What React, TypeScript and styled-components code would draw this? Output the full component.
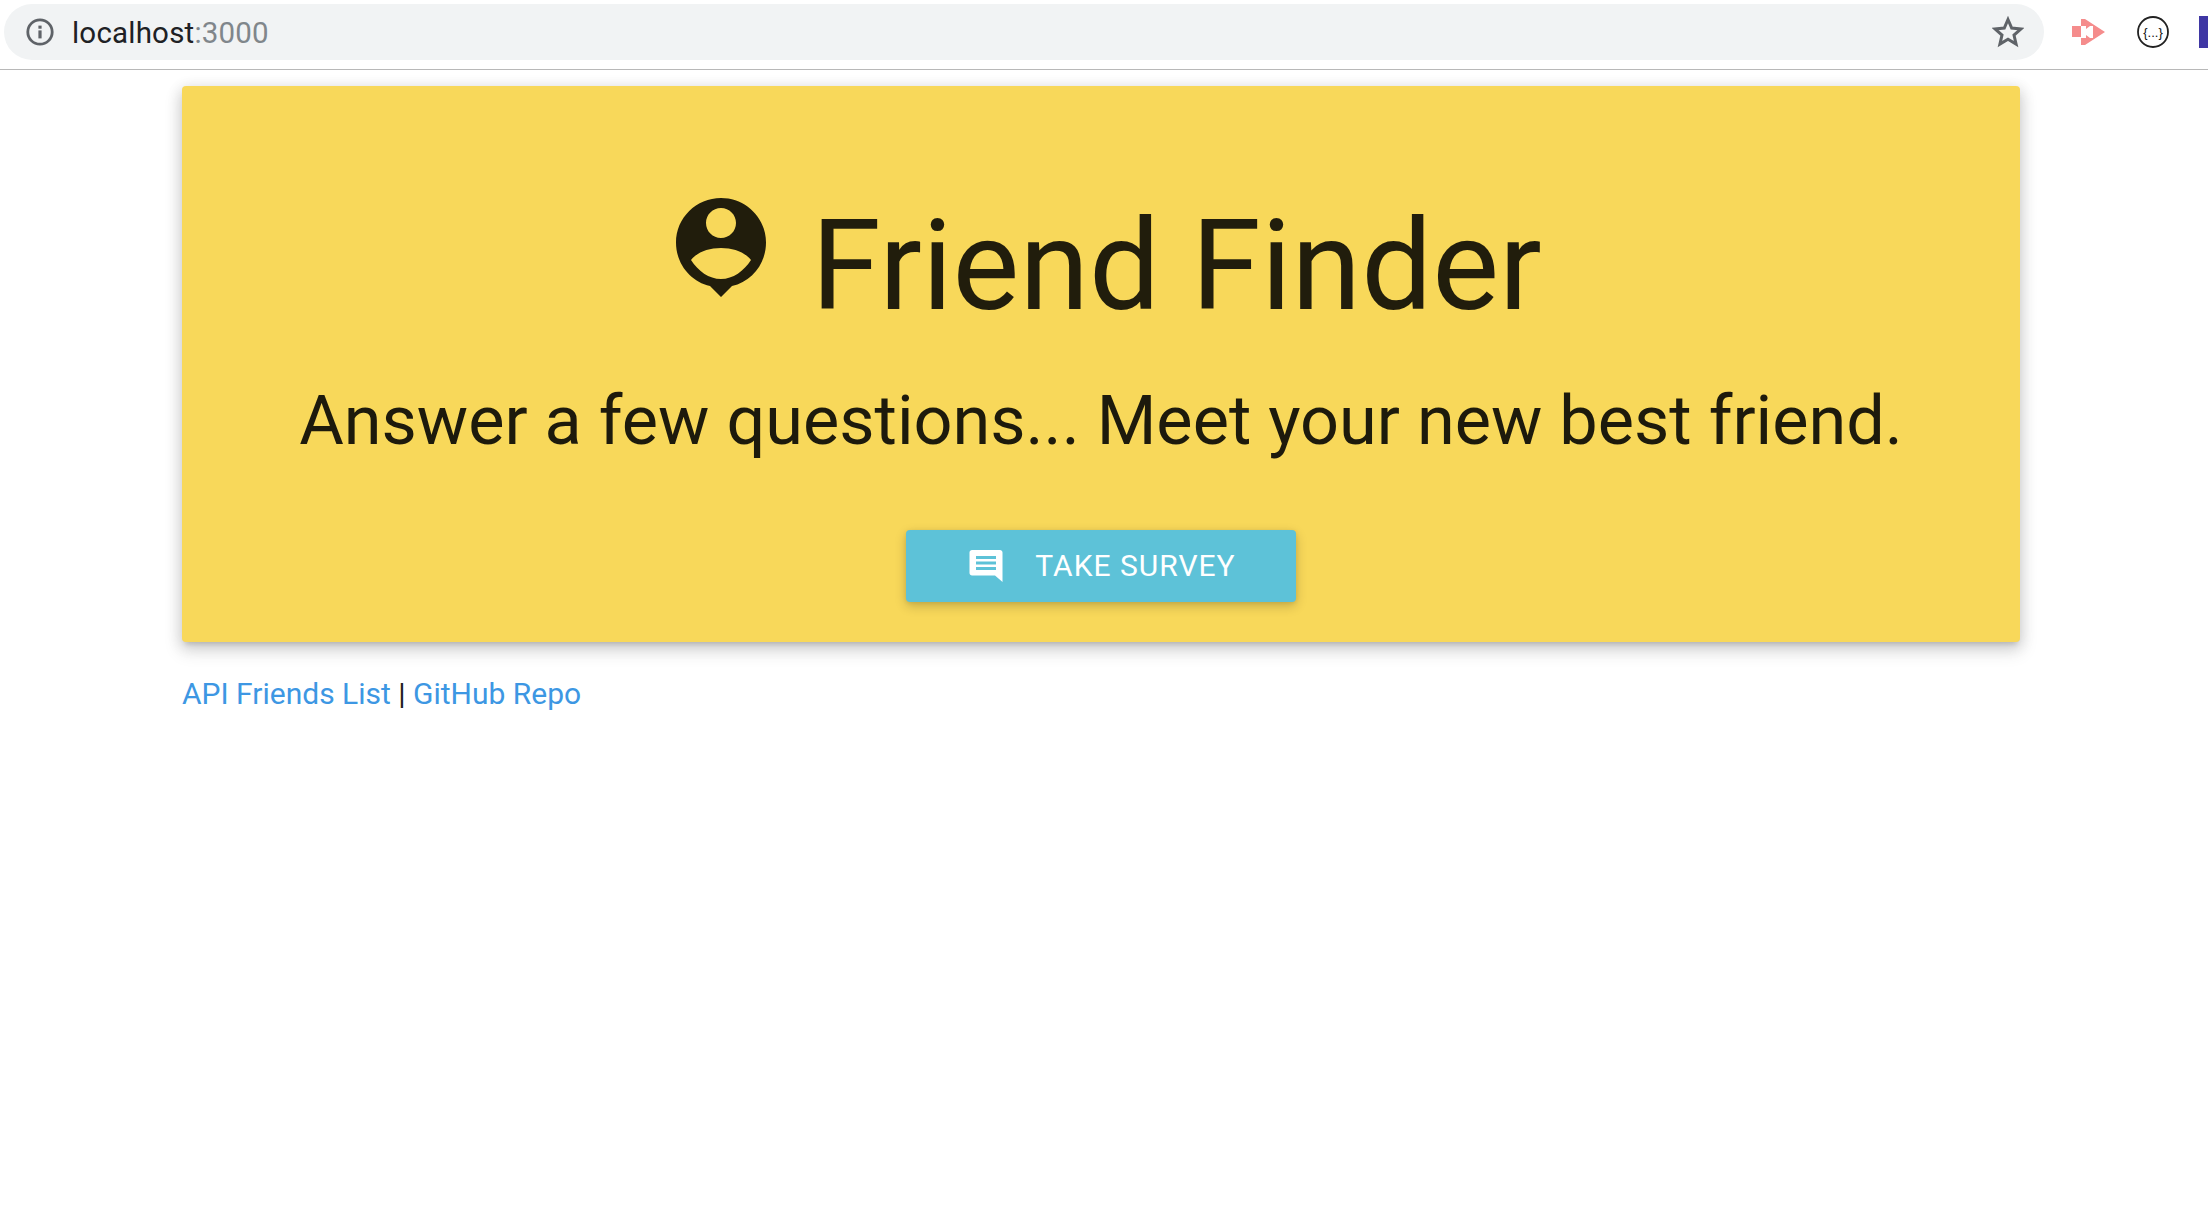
import React from "react";
import styled, { createGlobalStyle } from "styled-components";

const GlobalStyle = createGlobalStyle`
  html, body {
    margin: 0;
    padding: 0;
    background: #fff;
    overflow: hidden;
    font-family: Roboto, "Liberation Sans", sans-serif;
  }
`;

const App = () => {
  return (
    <>
      <GlobalStyle />
      <Toolbar>
        <AddressBar>
          <svg width="30" height="30" viewBox="0 0 30 30" fill="none">
            <circle cx="15" cy="15" r="12.2" stroke="#5f6368" strokeWidth="2.8" />
            <rect x="13.4" y="13.4" width="3.2" height="8" fill="#5f6368" />
            <rect x="13.4" y="8.6" width="3.2" height="3.1" fill="#5f6368" />
          </svg>
          <Url>
            localhost<UrlPort>:3000</UrlPort>
          </Url>
          <svg width="32" height="32" viewBox="0 0 32 32" fill="none">
            <path
              d="M16 3.5l3.7 8.6 9.3.8-7 6.1 2.1 9.1-8.1-4.8-8.1 4.8 2.1-9.1-7-6.1 9.3-.8z"
              stroke="#5f6368"
              strokeWidth="3"
              strokeLinejoin="miter"
            />
          </svg>
        </AddressBar>
        <Extensions>
          <svg width="34" height="28" viewBox="0 0 34 28" fill="#f58c8c">
            <path d="M1 8h9v11H1z" />
            <path d="M10 1h4l20 13-20 13h-4v-7h5v-3l4 3h3V8h-3l-4 3V8h-5z" />
          </svg>
          <svg width="34" height="34" viewBox="0 0 34 34">
            <circle cx="17" cy="17" r="15" fill="#fff" stroke="#222" strokeWidth="1.800" />
            <text x="17" y="21.500" textAnchor="middle" fontSize="13" fontFamily="Liberation Sans, sans-serif" fill="#111">
              {"{...}"}
            </text>
          </svg>
          <BlueExtension />
        </Extensions>
      </Toolbar>
      <Page>
        <Hero>
          <Title>
            <PinIcon width="90" height="100" viewBox="0 0 90 100">
              <path
                fillRule="evenodd"
                fill="#211d0c"
                d="M45 0C20.400 0 0 19.800 0 44.500 0 66 14.700 83.800 34 88l11 11 11-11c19.300-4.200 34-22 34-43.500C90 19.800 69.600 0 45 0zM45 10c8.300 0 15 6.700 15 15s-6.700 15-15 15-15-6.700-15-15 6.700-15 15-15zM45 50c13 0 24 4.500 30 12-7 11-18 19-30 19s-23-8-30-19c6-7.500 17-12 30-12z"
              />
            </PinIcon>
            Friend Finder
          </Title>
          <Subtitle>Answer a few questions... Meet your new best friend.</Subtitle>
          <SurveyButton>
            <svg width="34" height="33" viewBox="0 0 34 33">
              <path
                fill="#fff"
                fillRule="evenodd"
                d="M3 1h28c1.300 0 2.500 1.200 2.500 2.500V33L26 26.500H3c-1.300 0-2.500-1.200-2.500-2.500V3.500C.5 2.200 1.700 1 3 1zM7 7v3h20V7zM7 12.500v3h20v-3zM7 18v3h20v-3z"
              />
            </svg>
            TAKE SURVEY
          </SurveyButton>
        </Hero>
        <Footer>
          <FooterLink>API Friends List</FooterLink> | <FooterLink>GitHub Repo</FooterLink>
        </Footer>
      </Page>
    </>
  );
};

export default App;

const Toolbar = styled.div`
  display: flex;
  align-items: flex-start;
  height: 70px;
  padding: 4px 0 0 4px;
  border-bottom: 1px solid #b8b8b8;
  box-sizing: border-box;
  overflow: hidden;
`;

const AddressBar = styled.div`
  display: flex;
  align-items: center;
  flex: 0 0 2040px;
  height: 56px;
  box-sizing: border-box;
  padding: 0 20px 0 21px;
  border-radius: 28px;
  background: #f1f3f4;
`;

const Url = styled.div`
  flex: 1;
  margin: 2px 0 0 17px;
  font-size: 29.500px;
  letter-spacing: 0.2px;
  color: #202124;
`;

const UrlPort = styled.span`
  color: #80868b;
`;

const Extensions = styled.div`
  display: flex;
  align-items: center;
  height: 56px;
  margin-left: 27px;
  gap: 31px;
`;

const BlueExtension = styled.div`
  flex: 0 0 20px;
  height: 32px;
  margin-left: -2px;
  background: #3f37a4;
`;

const Page = styled.div`
  width: 1838px;
  margin: 16px 0 0 182px;
`;

const Hero = styled.div`
  display: flex;
  flex-direction: column;
  align-items: center;
  height: 556px;
  box-sizing: border-box;
  padding-top: 120px;
  border-radius: 4px;
  background: #f8d85a;
  box-shadow: 0 8px 17px 2px rgba(0, 0, 0, 0.12), 0 3px 14px 2px rgba(0, 0, 0, 0.1), 0 5px 5px -3px rgba(0, 0, 0, 0.14);
  color: #211d0c;
`;

const Title = styled.h1`
  display: flex;
  align-items: center;
  gap: 45px;
  margin: 0 0 0 16px;
  height: 120px;
  font-size: 126px;
  font-weight: 400;
  line-height: 120px;
  white-space: nowrap;
`;

const PinIcon = styled.svg`
  margin-bottom: 36px;
`;

const Subtitle = styled.h2`
  margin: 53px 0 0;
  font-size: 68.400px;
  font-weight: 400;
  line-height: 84px;
  color: #1d1a0c;
  white-space: nowrap;
`;

const SurveyButton = styled.button`
  display: flex;
  align-items: center;
  justify-content: center;
  gap: 32px;
  margin-top: 67px;
  width: 390px;
  height: 72px;
  border: none;
  border-radius: 4px;
  padding: 0 0 2px 3px;
  background: #5dc2d8;
  color: #fff;
  font-family: inherit;
  font-size: 30px;
  letter-spacing: 1px;
  box-shadow: 0 4px 12px rgba(0, 0, 0, 0.2), 0 1px 4px rgba(0, 0, 0, 0.08);
`;

const Footer = styled.p`
  margin: 33px 0 0;
  font-size: 30px;
  line-height: 38px;
  color: #212121;
`;

const FooterLink = styled.a`
  color: #3d97e3;
  cursor: pointer;
`;
